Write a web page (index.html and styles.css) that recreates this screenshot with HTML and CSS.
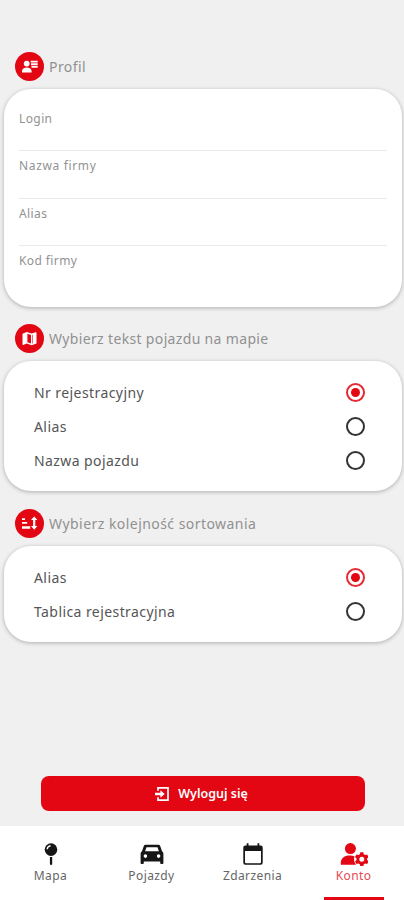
FILE: index.html
```html
<!DOCTYPE html>
<html lang="pl">
<head>
<meta charset="utf-8">
<meta name="viewport" content="width=device-width, initial-scale=1">
<title>Konto</title>
<link rel="stylesheet" href="styles.css">
</head>
<body>
<main class="content">
  <section class="section profile">
    <h2 class="heading">
      <span class="badge"><svg viewBox="0 0 29 29"><circle cx="11.7" cy="11.6" r="2.9"/><path d="M7 20.4v-1.3c0-2.4 2.4-3.6 4.8-3.6s4.8 1.2 4.8 3.6v1.3z"/><path d="M15.7 8.7h7v1.8h-7zM16 11.2h6.7v2H16zM16.5 14h6.2v1.800h-6.2z"/></svg></span>
      <span class="title">Profil</span>
    </h2>
    <div class="card fields">
      <div class="field"><span>Login</span></div>
      <div class="field wide"><span>Nazwa firmy</span></div>
      <div class="field"><span>Alias</span></div>
      <div class="field"><span>Kod firmy</span></div>
    </div>
  </section>

  <section class="section map-text">
    <h2 class="heading">
      <span class="badge"><svg viewBox="0 0 29 29"><path fill-rule="evenodd" d="M7.5 9.7 11.7 8l5 1.5L20.5 8.2q1-.3 1 .7v10.7l-4.8 1.6-5-1.6-3.5 1.3q-.7.2-.7-.6zM12.4 9.8v8.5l3.6 1.2V11zM17.4 11v8.4l.6-.2v-8.4z"/></svg></span>
      <span class="title">Wybierz tekst pojazdu na mapie</span>
    </h2>
    <div class="card options">
      <div class="option"><span>Nr rejestracyjny</span><i class="radio checked"></i></div>
      <div class="option"><span>Alias</span><i class="radio"></i></div>
      <div class="option"><span>Nazwa pojazdu</span><i class="radio"></i></div>
    </div>
  </section>

  <section class="section sorting">
    <h2 class="heading">
      <span class="badge"><svg viewBox="0 0 29 29"><path d="M7 9.200h3v1.700H7zM7 13h5.200v1.800H7zM7 17.200h8.200v2.600H7z"/><path d="m19.200 7.600 3.200 3.500h-2.100v6h2.100l-3.200 3.600-3.200-3.600h2.100v-6H16z"/></svg></span>
      <span class="title">Wybierz kolejność sortowania</span>
    </h2>
    <div class="card options">
      <div class="option"><span>Alias</span><i class="radio checked"></i></div>
      <div class="option"><span>Tablica rejestracyjna</span><i class="radio"></i></div>
    </div>
  </section>

  <button class="logout" type="button">
    <svg viewBox="0 0 16 16"><path d="M4 4.800V1.800h10v12.400H4v-3" fill="none" stroke="currentColor" stroke-width="1.700"/><path d="M1 6.700h5.400V4.200L10.700 8l-4.300 3.800V9.300H1z" fill="currentColor"/></svg>
    <span>Wyloguj się</span>
  </button>
</main>

<nav class="tabs">
  <a class="tab map"><svg viewBox="0 0 28 24"><circle cx="14" cy="7.600" r="6.300"/><path d="M12.900 15h2.300v7.200l-1.100 1-1.200-1z"/><path d="M10.200 7.200q.3-3 3.400-3.400" fill="none" stroke="#fff" stroke-width="1.400"/></svg><span>Mapa</span></a>
  <a class="tab cars"><svg viewBox="0 0 28 24"><path fill-rule="evenodd" d="M7.700 2.800h12.600q1.500 0 2 1.400l1.700 5q1.400.8 1.400 2.500v9.200q0 1-1 1h-1.200q-1 0-1-1v-1.500H5.800v1.500q0 1-1 1H3.600q-1 0-1-1v-9.200q0-1.700 1.400-2.500l1.700-5q.5-1.400 2-1.400zM8.500 5.200 7.100 9.200h13.800l-1.400-4zM7.400 12.300a1.800 1.800 0 1 0 0 3.600 1.800 1.800 0 0 0 0-3.600zM20.600 12.300a1.800 1.800 0 1 0 0 3.600 1.800 1.800 0 0 0 0-3.600z"/></svg><span>Pojazdy</span></a>
  <a class="tab events"><svg viewBox="0 0 28 24"><path fill-rule="evenodd" d="M7.700 1.300h1.800v2.200h9V1.300h1.800v2.200h1.400q2 0 2 2v15.300q0 2-2 2H6.300q-2 0-2-2V5.500q0-2 2-2h1.400zM6 9v11.200q0 1 1 1h14q1 0 1-1V9z"/></svg><span>Zdarzenia</span></a>
  <a class="tab account active"><svg viewBox="0 0 28 24"><circle cx="10.400" cy="6.600" r="5.500"/><path d="M.8 22.700v-1.700c0-5 3.700-7.500 8.700-7.500 2 0 3.500.2 5 .9-1 2.900-.5 5.800 1.600 8.300z"/><path fill-rule="evenodd" d="m20.300 10.300h3l.5 2 1.300.8 2-.6 1.500 2.600-1.500 1.400v1.500l1.500 1.400-1.500 2.600-2-.6-1.300.8-.5 2h-3l-.5-2-1.300-.8-2 .6-1.500-2.600 1.500-1.400v-1.500L15 15.100l1.500-2.600 2 .6 1.300-.8zM21.800 14.700a2.500 2.500 0 1 0 0 5 2.500 2.500 0 0 0 0-5z"/></svg><span>Konto</span></a>
</nav>
</body>
</html>
```
FILE: styles.css
```css
* {
  box-sizing: border-box;
}

body {
  margin: 0;
  height: 900px;
  display: flex;
  flex-direction: column;
  background: #f0f0f0;
  color: #555;
  font-family: "Noto Sans", "Open Sans", sans-serif;
  overflow: hidden;
}

.content {
  flex: 1;
  display: flex;
  flex-direction: column;
  padding: 52px 2px 15px 4px;
}

.section {
  margin-bottom: 17px;
}

.map-text {
  margin-bottom: 18px;
}

.heading {
  display: flex;
  align-items: center;
  gap: 5px;
  height: 29px;
  margin: 0 0 8px 11px;
  color: #919191;
  font-size: 14px;
  font-weight: 400;
  letter-spacing: 0.340px;
}

.sorting .heading,
.profile .heading {
  letter-spacing: 0.450px;
}

.badge {
  width: 29px;
  height: 29px;
  border-radius: 50%;
  background: #e30613;
}

.badge svg {
  display: block;
  fill: #fff;
}

.card {
  background: #fff;
  border-radius: 27px;
  box-shadow: 0 1px 4px rgba(0, 0, 0, 0.28);
}

.fields {
  height: 218px;
  padding: 15px 15px 0;
}

.field {
  height: 47.300px;
  padding-top: 6px;
  border-bottom: 1px solid #ebebeb;
  color: #929292;
  font-size: 12px;
  line-height: 17px;
  letter-spacing: 0.400px;
}

.field.wide {
  letter-spacing: 0.650px;
}

.field:last-child {
  border-bottom: 0;
}

.options {
  padding: 15px 37px 14px 30px;
}

.option {
  display: flex;
  align-items: center;
  justify-content: space-between;
  height: 33.700px;
  font-size: 14px;
  letter-spacing: 0.420px;
}

.radio {
  display: grid;
  place-items: center;
  width: 19px;
  height: 19px;
  border: 2px solid #333;
  border-radius: 50%;
}

.radio.checked {
  border-color: #e52a33;
}

.radio.checked::after {
  content: "";
  width: 9px;
  height: 9px;
  border-radius: 50%;
  background: #e30613;
}

.logout {
  display: flex;
  align-items: center;
  justify-content: center;
  gap: 8px;
  width: 324px;
  height: 35px;
  margin: auto 0 0 37px;
  padding: 0 4px 0 0;
  border: 0;
  border-radius: 8px;
  background: #e30613;
  color: #fff;
  font: 600 12.500px "Noto Sans", sans-serif;
}

.logout svg {
  width: 16px;
  height: 16px;
}

.tabs {
  display: grid;
  grid-template-columns: repeat(4, 1fr);
  height: 74px;
  background: #fff;
}

.tab {
  display: flex;
  flex-direction: column;
  align-items: center;
  padding-top: 16px;
  color: #666;
  font-size: 12px;
  line-height: 17px;
  letter-spacing: 0.400px;
}

.tab svg {
  width: 28px;
  height: 24px;
  margin-bottom: 1px;
  fill: #161616;
}

.tab.active {
  color: #e34b54;
}

.tab.active svg {
  fill: #e30613;
}

.tab.active::after {
  content: "";
  width: 60px;
  height: 3px;
  margin-top: auto;
  background: #e30613;
}
```
